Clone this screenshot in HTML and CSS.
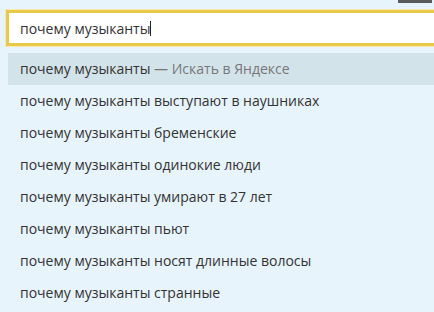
FILE: index.html
```html
<!DOCTYPE html>
<html lang="ru">
<head>
    <meta charset="UTF-8">
    <title>Поиск</title>
    <link rel="stylesheet" href="styles.css">
</head>
<body>
    <div class="top-strip"><span class="top-mark"></span></div>
    <div class="search-box">
        <span class="query">почему музыканты</span><span class="caret"></span>
    </div>
    <ul class="suggest">
        <li class="suggest-item active">почему музыканты <span class="hint">— Искать в Яндексе</span></li>
        <li class="suggest-item">почему музыканты выступают в наушниках</li>
        <li class="suggest-item">почему музыканты бременские</li>
        <li class="suggest-item">почему музыканты одинокие люди</li>
        <li class="suggest-item">почему музыканты умирают в 27 лет</li>
        <li class="suggest-item">почему музыканты пьют</li>
        <li class="suggest-item">почему музыканты носят длинные волосы</li>
        <li class="suggest-item">почему музыканты странные</li>
    </ul>
</body>
</html>
```

FILE: styles.css
```css
/* Общие стили */
body {
    margin: 0;
    padding: 0;
    background-color: #e7f4fb;
    font-family: "Open Sans", "Noto Sans", sans-serif;
    font-size: 14px;
    color: #333;
    width: 434px;
    height: 312px;
    overflow: hidden;
}

.top-strip {
    height: 10px;
    display: flex;
    justify-content: flex-end;
    padding-right: 2px;
}

.top-mark {
    width: 34px;
    height: 3px;
    background-color: #5a5a5a;
}

/* Поле поиска */
.search-box {
    margin-left: 6px;
    height: 30px;
    border: 3px solid #e8c94a;
    border-right: none;
    background-color: #fff;
    display: flex;
    align-items: center;
    padding-left: 11px;
    box-shadow: 0 0 0 1px #f6e9a8;
}

.caret {
    width: 1px;
    height: 15px;
    background-color: #222;
}

/* Подсказки */
.suggest {
    list-style: none;
    margin: 7px 0 0 8px;
    padding: 0;
}

.suggest-item {
    height: 32px;
    line-height: 32px;
    padding-left: 12px;
    white-space: nowrap;
}

.suggest-item.active {
    background-color: #d3e3ea;
}

.hint {
    color: #777;
}
```
